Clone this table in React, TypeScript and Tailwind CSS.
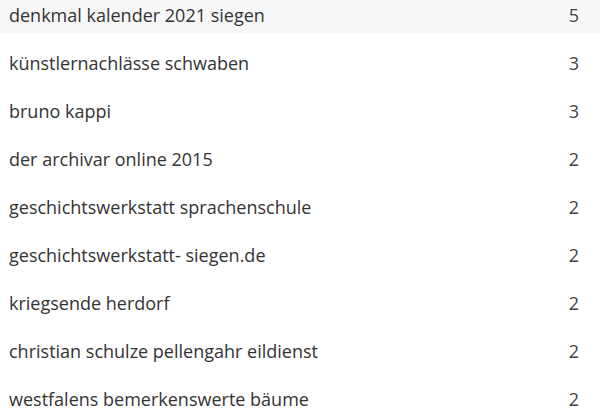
const rows: { term: string; count: number }[] = [
  { term: 'denkmal kalender 2021 siegen', count: 5 },
  { term: 'künstlernachlässe schwaben', count: 3 },
  { term: 'bruno kappi', count: 3 },
  { term: 'der archivar online 2015', count: 2 },
  { term: 'geschichtswerkstatt sprachenschule', count: 2 },
  { term: 'geschichtswerkstatt- siegen.de', count: 2 },
  { term: 'kriegsende herdorf', count: 2 },
  { term: 'christian schulze pellengahr eildienst', count: 2 },
  { term: 'westfalens bemerkenswerte bäume', count: 2 },
];

const App = () => {
  return (
    <div className="w-[600px] h-[418px] overflow-hidden bg-white font-['Open_Sans',sans-serif] text-[18px] text-[#333]">
      <ul className="-mt-[9px]">
        {rows.map((row, i) => (
          <li
            key={row.term}
            className={`flex h-12 items-center justify-between pl-[9px] pr-[21px] ${
              i === 0 ? 'bg-[linear-gradient(to_bottom,#f7f7f7_42px,transparent_42px)]' : ''
            }`}
          >
            <span>{row.term}</span>
            <span className="text-[#444]">{row.count}</span>
          </li>
        ))}
      </ul>
    </div>
  );
};

export default App;
